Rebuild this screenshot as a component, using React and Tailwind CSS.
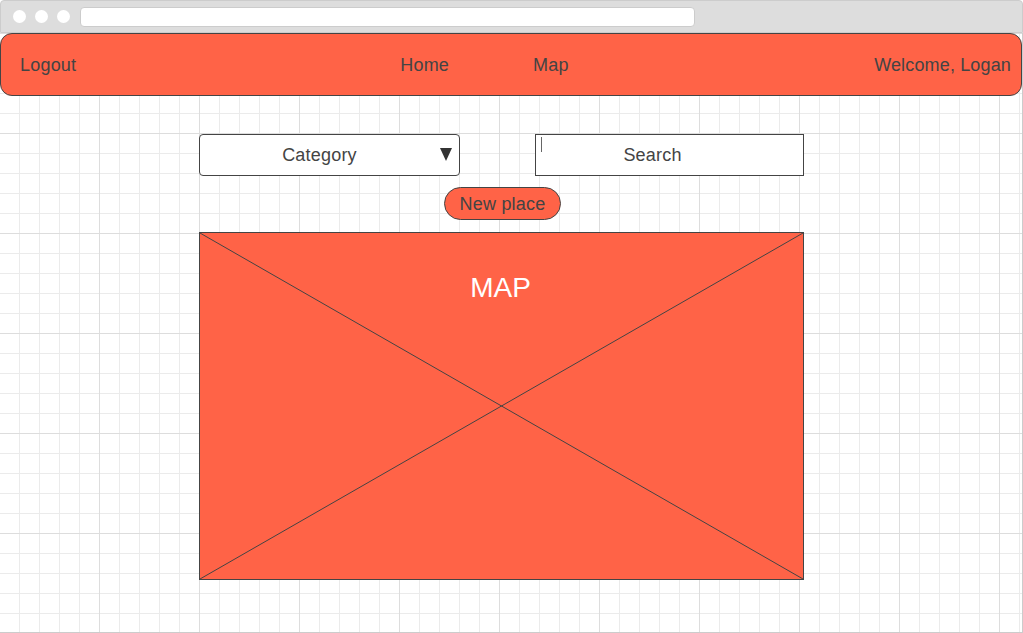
import React from 'react';

const font = { fontFamily: '"Liberation Sans", Arial, sans-serif' };

const Chrome = () => (
  <div className="h-[33px] bg-[#dddddd] border border-[#cccccc] rounded-t-[4px] flex items-center pl-[12px] gap-[9px]">
    <span className="w-[13px] h-[13px] rounded-full bg-white" />
    <span className="w-[13px] h-[13px] rounded-full bg-white" />
    <span className="w-[13px] h-[13px] rounded-full bg-white" />
    <div className="ml-[1px] w-[615px] h-[20px] bg-white border border-[#cccccc] rounded-[4px]" />
  </div>
);

const Navbar = () => (
  <nav className="h-[63px] bg-[#ff6347] border border-[#444444] rounded-[12px] flex items-center pt-[2px] text-[18px] text-[#444444] pl-[19px] pr-[10px]">
    <span className="tracking-[0.2px]">Logout</span>
    <span className="ml-[324px] tracking-[0.2px]">Home</span>
    <span className="ml-[84px] tracking-[0.2px]">Map</span>
    <span className="ml-auto tracking-[0.15px]">Welcome, Logan</span>
  </nav>
);

export default function App() {
  return (
    <div className="w-[1023px] h-[633px] overflow-hidden bg-white" style={font}>
      <Chrome />
      <div className="h-[600px] border-b border-r border-[#cccccc] bg-white bg-[image:linear-gradient(to_right,#dddddd_1px,transparent_1px),linear-gradient(to_bottom,#dddddd_1px,transparent_1px),linear-gradient(to_right,#ebebeb_1px,transparent_1px),linear-gradient(to_bottom,#ebebeb_1px,transparent_1px)] bg-[size:100px_100px,100px_100px,20px_20px,20px_20px] bg-[position:-1px_0,0_0,-1px_0,0_0]">
        <Navbar />

        <div className="ml-[199px] w-[605px] mt-[38px]">
          <div className="flex justify-between">
            <div className="relative w-[261px] h-[42px] bg-white border border-[#444444] rounded-[4px] flex items-center justify-center text-[18px] text-[#444444]">
              <span className="-ml-[20px] tracking-[0.2px]">Category</span>
              <svg className="absolute left-[240px] top-[13px]" width="12" height="13" viewBox="0 0 12 13">
                <polygon points="0,0 12,0 6,13" fill="#333333" />
              </svg>
            </div>
            <div className="relative w-[269px] h-[42px] bg-white border border-[#444444] flex items-center justify-center text-[18px] text-[#444444]">
              <span className="absolute left-[5px] top-[2px] w-[1px] h-[15px] bg-[#666666]" />
              <span className="-ml-[34px] tracking-[0.2px]">Search</span>
            </div>
          </div>

          <div className="mt-[11px] ml-[245px] w-[117px] h-[33px] pt-[1px] bg-[#ff6347] border border-[#444444] rounded-full flex items-center justify-center text-[18px] text-[#444444]">
            <span className="tracking-[0.2px]">New place</span>
          </div>

          <div className="relative mt-[12px] w-[605px] h-[348px] bg-[#ff6347] border border-[#444444] flex justify-center">
            <svg className="absolute inset-0 w-full h-full" viewBox="0 0 603 346" preserveAspectRatio="none">
              <line x1="0" y1="0" x2="603" y2="346" stroke="#444444" strokeWidth="1" />
              <line x1="0" y1="346" x2="603" y2="0" stroke="#444444" strokeWidth="1" />
            </svg>
            <span className="relative mt-[41px] -ml-[2px] text-[28px] leading-none text-white">MAP</span>
          </div>
        </div>
      </div>
    </div>
  );
}
